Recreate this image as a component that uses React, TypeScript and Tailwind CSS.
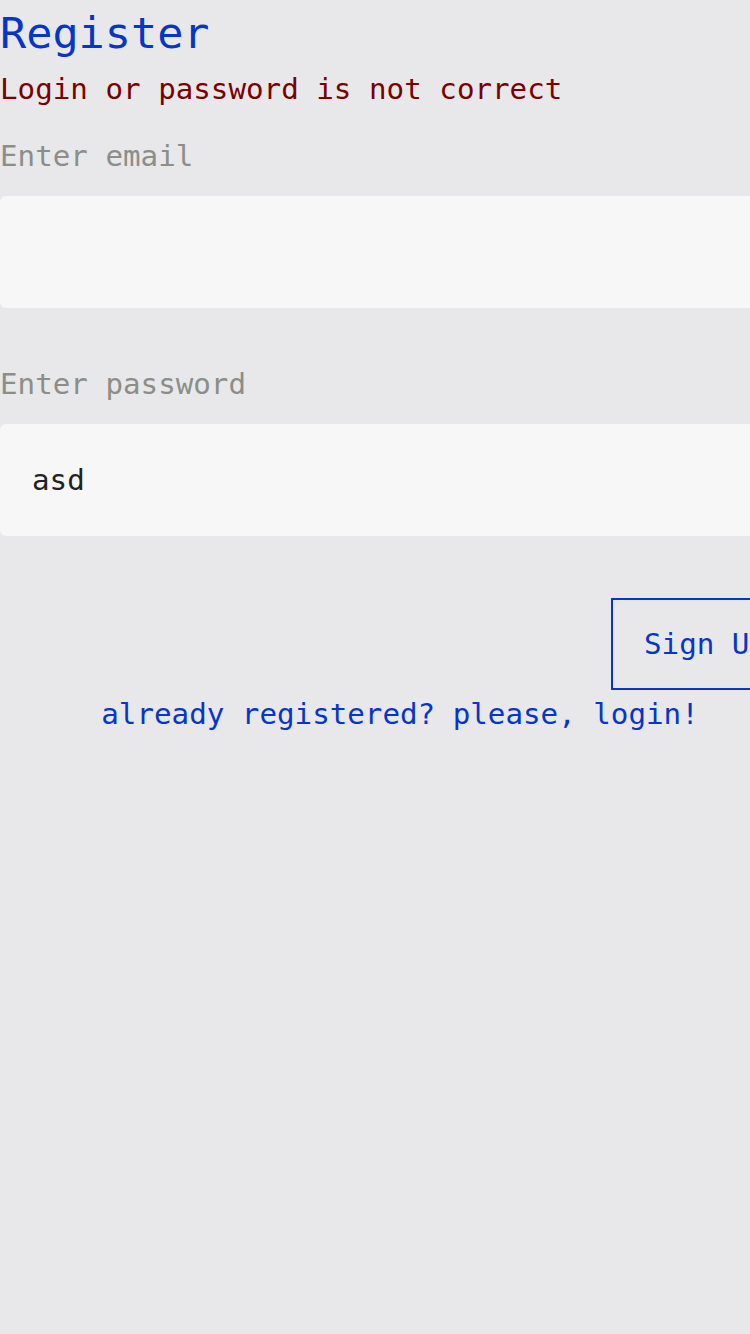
export default function App() {
  return (
    <div
      className="min-h-screen w-[750px] overflow-hidden bg-[#e8e8ea] text-[29.2px]"
      style={{ fontFamily: '"DejaVu Sans Mono", "Liberation Mono", monospace' }}
    >
      <div className="w-[800px]">
        <h1 className="text-[43.5px] leading-[66px] text-[#0635c9]">Register</h1>
        <p className="leading-[46px] text-[#7a0000]">Login or password is not correct</p>

        <label className="mt-6 block leading-[40px] text-[#8b8e89]">Enter email</label>
        <input
          type="email"
          className="mt-5 block h-[112px] w-full rounded-md bg-[#f7f7f7] px-8 text-[#222] outline-none"
        />

        <label className="mt-14 block leading-[40px] text-[#8b8e89]">Enter password</label>
        <input
          type="text"
          defaultValue="asd"
          className="mt-5 block h-[112px] w-full rounded-md bg-[#f7f7f7] px-8 text-[#222] outline-none"
        />

        <div className="mt-[62px] flex justify-end">
          <button className="border-2 border-[#0635c9] px-[31px] py-6 leading-[40px] text-[#0635c9]">
            Sign Up
          </button>
        </div>

        <p className="mt-1 text-center leading-[40px] text-[#0635c9]">
          already registered? please, login!
        </p>
      </div>
    </div>
  )
}
